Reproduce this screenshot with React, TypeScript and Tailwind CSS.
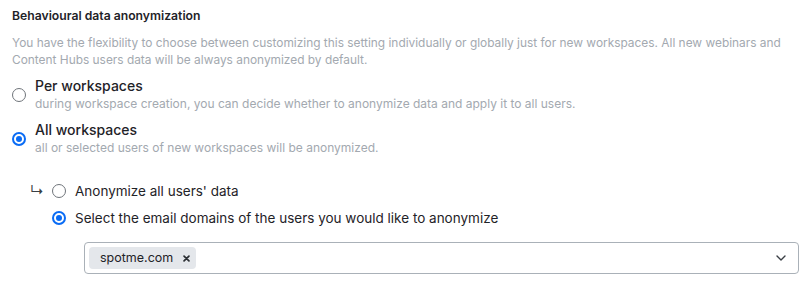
import React, { useState } from 'react';

const Radio = ({ checked }: { checked: boolean }) =>
  checked ? (
    <span className="flex h-[14px] w-[14px] shrink-0 items-center justify-center rounded-full border-[2px] border-[#0a6cf5] bg-white">
      <span className="h-[6px] w-[6px] rounded-full bg-[#0a6cf5]" />
    </span>
  ) : (
    <span className="h-[14px] w-[14px] shrink-0 rounded-full border border-[#6f747a] bg-white" />
  );

export default function App() {
  const [scope, setScope] = useState<'per' | 'all'>('all');
  const [mode, setMode] = useState<'everyone' | 'domains'>('domains');
  const [domains, setDomains] = useState(['spotme.com']);

  return (
    <div className="w-[809px] bg-white px-[12px] pt-[7px] font-['Inter','Liberation_Sans',sans-serif] text-[#1f2328]">
      <div className="text-[12.2px] font-semibold leading-[18px]">Behavioural data anonymization</div>
      <p className="mt-[9px] text-[11.9px] leading-[17px] text-[#a3a9b0]">
        You have the flexibility to choose between customizing this setting individually or globally just for new
        workspaces. All new webinars and Content Hubs users data will be always anonymized by default.
      </p>

      {/* Scope */}
      <div className="mt-[9px] flex flex-col gap-[9px]">
        <label className="flex cursor-pointer items-center gap-[9px]" onClick={() => setScope('per')}>
          <Radio checked={scope === 'per'} />
          <div>
            <div className="text-[14px] font-medium leading-[18px]">Per workspaces</div>
            <div className="text-[12px] leading-[17px] text-[#a3a9b0]">
              during workspace creation, you can decide whether to anonymize data and apply it to all users.
            </div>
          </div>
        </label>
        <label className="flex cursor-pointer items-center gap-[9px]" onClick={() => setScope('all')}>
          <Radio checked={scope === 'all'} />
          <div>
            <div className="text-[14px] font-medium leading-[18px]">All workspaces</div>
            <div className="text-[12px] leading-[17px] text-[#a3a9b0]">
              all or selected users of new workspaces will be anonymized.
            </div>
          </div>
        </label>
      </div>

      {/* Nested options */}
      <div className="mt-[25px] flex flex-col gap-[7px] pl-[18px]">
        <div className="flex items-center">
          <span className="w-[22px] text-[14px] leading-[20px] text-[#3a3f45]">↳</span>
          <label className="flex cursor-pointer items-center gap-[9px]" onClick={() => setMode('everyone')}>
            <Radio checked={mode === 'everyone'} />
            <span className="text-[13.5px] leading-[20px]">Anonymize all users' data</span>
          </label>
        </div>
        <label className="ml-[22px] flex cursor-pointer items-center gap-[9px]" onClick={() => setMode('domains')}>
          <Radio checked={mode === 'domains'} />
          <span className="text-[13.5px] leading-[20px]">Select the email domains of the users you would like to anonymize</span>
        </label>
      </div>

      <div className="ml-[72px] mr-[-2px] mt-[14px] flex h-[32px] items-center rounded-[4px] border border-[#aab1b8] pl-[4px] pr-[12px]">
        <div className="flex flex-1 gap-[4px]">
          {domains.map((d) => (
            <span key={d} className="flex h-[22px] items-center gap-[9px] rounded-[4px] bg-[#e4e7eb] pl-[11px] pr-[6px] text-[12.5px]">
              {d}
              <button
                className="flex h-[10px] w-[8px] items-center justify-center"
                onClick={() => setDomains(domains.filter((x) => x !== d))}
              >
                <svg viewBox="0 0 10 10" className="h-[7px] w-[7px]" stroke="#2a2e33" strokeWidth="2.4" strokeLinecap="round">
                  <path d="M1.5 1.5l7 7M8.5 1.5l-7 7" />
                </svg>
              </button>
            </span>
          ))}
        </div>
        <svg viewBox="0 0 10 6" className="h-[6px] w-[10px]" fill="none" stroke="#3a3f45" strokeWidth="1.4" strokeLinecap="round" strokeLinejoin="round">
          <path d="M1 1l4 4 4-4" />
        </svg>
      </div>
    </div>
  );
}
